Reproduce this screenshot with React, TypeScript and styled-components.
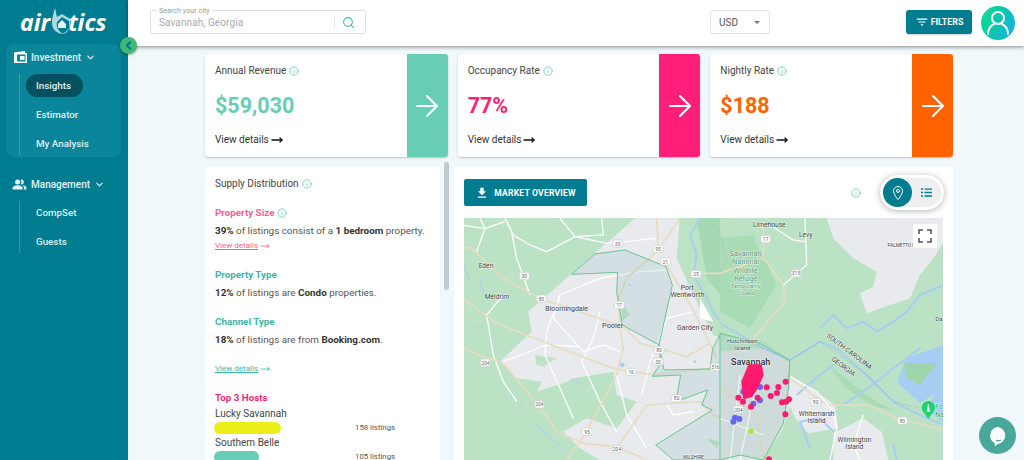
import React from "react";
import styled, { createGlobalStyle } from "styled-components";
import { Search, ChevronDown, ChevronLeft, ArrowRight, MoveRight, Info } from "lucide-react";
import { MdFilterList, MdFileDownload, MdPeopleAlt } from "react-icons/md";
import { FaListUl } from "react-icons/fa";
import { IoLocationOutline } from "react-icons/io5";

const TEAL = "#007c91";
const MINT = "#68cdb5";
const PINK = "#ff1f78";
const ORANGE = "#ff6300";
const SEA = "#3bb7aa";

const Global = createGlobalStyle`
  html, body { margin: 0; padding: 0; height: 100%; overflow: hidden; }
  body { font-family: Roboto, "Liberation Sans", sans-serif; background: #f0f8fb; color: #3c3c3c; }
  * { box-sizing: border-box; }
`;

const Shell = styled.div`display: flex; width: 1024px; height: 460px; overflow: hidden; position: relative;`;
const Sidebar = styled.aside`width: 128px; flex: none; background: ${TEAL}; color: #e8f6f8; padding: 44px 7px 0 6px; position: relative; display: flex; flex-direction: column;`;
const Logo = styled.div`position: absolute; top: 3px; left: 20px; display: flex; align-items: center; height: 38px; color: #fff; font: italic 700 23px "Open Sans", sans-serif; letter-spacing: 0;`;
const Collapse = styled.button`position: absolute; left: 120px; top: 37px; z-index: 5; width: 17px; height: 17px; border-radius: 50%; border: 0; padding: 0; background: #41b874; color: ${TEAL}; display: flex; align-items: center; justify-content: center; box-shadow: 0 1px 3px rgba(0,0,0,.35);`;
const NavGroup = styled.div<{ $active?: boolean }>`border-radius: 8px; background: ${p => p.$active ? "#0a8599" : "transparent"}; height: ${p => p.$active ? "113px" : "auto"}; margin-bottom: 14px; padding-top: 3px;`;
const NavHead = styled.div`display: flex; align-items: center; height: 20px; padding-left: 8px; font-size: 10px; font-weight: 500; gap: 4px; color: #e2f3f5;`;
const NavList = styled.div`margin: 7px 0 0 13px; border-left: 1px solid rgba(255,255,255,.22); padding-left: 6px; display: flex; flex-direction: column; gap: 6px;`;
const NavItem = styled.div<{ $active?: boolean }>`height: 23px; width: 57px; white-space: nowrap; display: flex; align-items: center; padding-left: 10px; border-radius: 12px; font-size: 9.8px; font-weight: 500; color: #dff1f4; background: ${p => p.$active ? "#03505f" : "transparent"};`;

const Main = styled.main`flex: 1; min-width: 0; display: flex; flex-direction: column;`;
const Header = styled.header`height: 46px; flex: none; background: #fff; box-shadow: 0 1px 4px rgba(0,0,0,.45); display: flex; align-items: center; padding: 0 0 2px 22px; position: relative; z-index: 2;`;
const SearchBox = styled.div`position: relative; width: 216px; height: 24px; border: 1px solid #dedede; border-radius: 3px; display: flex; align-items: center; padding: 0 10px 0 8px; font-size: 10px; color: #a9a9a9;`;
const Legend = styled.span`position: absolute; left: 6px; top: -5px; padding: 0 2px; background: #fff; font-size: 7.2px; line-height: 9px; color: #9a9a9a;`;
const SearchValue = styled.span`flex: 1; letter-spacing: .1px;`;
const Divider = styled.span`width: 1px; height: 12px; background: #dfe8e8; margin-right: 7px;`;
const SearchIcon = styled(Search)`color: ${SEA}; display: block;`;
const Select = styled.div`margin-left: 344px; width: 60px; height: 24px; border: 1px solid #e2e2e2; border-radius: 3px; display: flex; align-items: center; justify-content: space-between; padding: 0 9px 0 8px; font-size: 10px; color: #555;`;
const Caret = styled.span`width: 0; height: 0; border: 3px solid transparent; border-top: 3.5px solid #777; margin-top: 3px;`;
const FilterBtn = styled.button`margin-left: 136px; width: 66px; height: 24px; border: 0; border-radius: 3px; background: ${TEAL}; color: #fff; display: flex; align-items: center; justify-content: center; gap: 2px; font: 700 8.8px Roboto, sans-serif; box-shadow: 0 1px 2px rgba(0,0,0,.2);`;
const Avatar = styled.div`margin: 2px 0 0 9px; width: 34px; height: 34px; border-radius: 50%; background: linear-gradient(115deg, #0fe08b 0%, #0bc8a8 45%, #13aef0 100%); display: flex; align-items: center; justify-content: center;`;

const Content = styled.div`flex: 1; min-height: 0; width: 748px; margin-left: 77px; padding-top: 8px; display: flex; flex-direction: column; gap: 10px;`;
const Cards = styled.div`display: grid; grid-template-columns: repeat(3, 1fr); gap: 10px; flex: none;`;
const Card = styled.div`height: 103px; background: #fff; border-radius: 3px; box-shadow: 0 1px 2px rgba(0,0,0,.22); display: flex; overflow: hidden;`;
const CardBody = styled.div`flex: 1; padding: 10px 10px 0; display: flex; flex-direction: column;`;
const Label = styled.div`display: flex; align-items: center; gap: 3px; font-size: 10px; line-height: 14px; color: #444;`;
const InfoIcon = styled(Info)`color: ${MINT}; flex: none;`;
const Value = styled.div<{ $c: string }>`margin-top: 15px; font-size: 21.5px; line-height: 26px; font-weight: 700; color: ${p => p.$c};`;
const Details = styled.div`margin-top: 14px; display: flex; align-items: center; gap: 2px; font-size: 10px; line-height: 14px; color: #333;`;
const CardArrow = styled.div<{ $c: string }>`width: 41px; background: ${p => p.$c}; color: #fff; display: flex; align-items: center; justify-content: center;`;

const Lower = styled.div`flex: 1; min-height: 0; display: grid; grid-template-columns: 235px 14px 499px;`;
const Panel = styled.section`background: #fff; border-radius: 3px 3px 0 0; overflow: hidden; padding: 10px 10px 0;`;
const Track = styled.div`padding: 0 5px 0 4px; margin-top: -5px;`;
const Thumb = styled.div`height: 128px; background: #c3cacc; border-radius: 3px;`;
const Section = styled.div<{ $mt: number }>`margin-top: ${p => p.$mt}px;`;
const SectionTitle = styled.div<{ $c: string }>`display: flex; align-items: center; gap: 3px; font-size: 9.8px; line-height: 14px; font-weight: 700; color: ${p => p.$c};`;
const Stat = styled.p`margin: 4px 0 0; font-size: 9.9px; line-height: 14px; color: #555; white-space: nowrap; b { color: #333; font-weight: 700; }`;
const SmallLink = styled.div<{ $c: string; $mt: number }>`margin-top: ${p => p.$mt}px; display: flex; align-items: center; gap: 2px; font-size: 8px; line-height: 10px; color: ${p => p.$c}; span { text-decoration: underline; }`;
const Host = styled.div`margin-top: 2px; font-size: 10px; line-height: 14px; color: #444;`;
const BarRow = styled.div`display: flex; align-items: center; height: 13px; margin-left: -1px;`;
const BarSlot = styled.div`width: 141px; flex: none;`;
const Bar = styled.div<{ $c: string }>`height: 12px; border-radius: 6px; background: ${p => p.$c};`;
const Count = styled.span`font-size: 7.8px; color: #555;`;

const MapPanel = styled.section`background: #fff; border-radius: 3px 3px 0 0; overflow: hidden; padding: 12px 10px 0; display: flex; flex-direction: column;`;
const MapBar = styled.div`display: flex; align-items: center; height: 27px; margin-bottom: 12px; flex: none;`;
const MarketBtn = styled.button`width: 123px; height: 27px; border: 0; border-radius: 2px; background: ${TEAL}; color: #fff; display: flex; align-items: center; justify-content: center; gap: 5px; font: 700 8.6px Roboto, sans-serif; letter-spacing: .2px;`;
const MapInfo = styled(Info)`color: ${MINT}; margin-left: auto;`;
const Toggle = styled.div`margin-left: 19px; margin-right: -1px; width: 64px; height: 35px; border-radius: 18px; background: #efefef; border: 3px solid #fff; box-shadow: 0 1px 6px rgba(0,0,0,.3); display: flex; align-items: center;`;
const ToggleOn = styled.div`width: 29px; height: 29px; border-radius: 50%; background: ${TEAL}; color: #fff; display: flex; align-items: center; justify-content: center;`;
const ToggleOff = styled.div`flex: 1; color: ${TEAL}; display: flex; align-items: center; justify-content: center;`;
const MapFrame = styled.div`position: relative; flex: 1; min-height: 0; overflow: hidden; background: #bce2c5;`;
const MapSvg = styled.svg`display: block; width: 480px; height: 242px;`;
const MapLabel = styled.text`font-family: Roboto, sans-serif; fill: #3c4043; stroke: rgba(255,255,255,.7); stroke-width: 3px; paint-order: stroke;`;
const Fullscreen = styled.button`position: absolute; top: 6px; right: 6px; width: 24px; height: 24px; border: 0; padding: 0; background: #fff; color: #555; display: flex; align-items: center; justify-content: center;`;
const Chat = styled.div`position: absolute; left: 979px; top: 417px; width: 37px; height: 37px; border-radius: 50%; background: #4aa79b; display: flex; align-items: center; justify-content: center; z-index: 6;`;

const Tag: React.FC<{ x: number; y: number; t: string; s?: number; a?: "middle" | "start"; r?: number; c?: string; w?: number }> = ({ x, y, t, s = 24, a = "middle", r, c, w }) => (
  <MapLabel x={x} y={y} fontSize={s} fontWeight={w} textAnchor={a} style={c ? { fill: c } : undefined} transform={r ? `rotate(${r} ${x} ${y})` : undefined}>{t}</MapLabel>
);
const Shield: React.FC<{ x: number; y: number; t: string }> = ({ x, y, t }) => (
  <g>
    <rect x={x - 15} y={y - 11} width="30" height="22" rx="6" fill="#fff" stroke="#c8c8c8" strokeWidth="2" />
    <text x={x} y={y + 6} fontSize="15" textAnchor="middle" fill="#666" fontFamily="Roboto, sans-serif">{t}</text>
  </g>
);

const whiteRoads = [
  "M60 10 L75 40 L50 110", "M135 10 L160 60 L210 90 L260 110 L345 65 L440 85 L590 70",
  "M155 50 L170 130 L210 240", "M345 65 L430 60 L425 10", "M300 10 L345 65", "M0 30 L75 40 L135 20",
  "M260 350 L300 240 L420 190 L540 170 L620 165", "M260 350 L255 420 L300 520 L340 610", "M300 240 L280 310 L370 410 L430 390 L480 410",
  "M420 290 L400 370 L365 440 L420 560 L470 650", "M130 440 L260 390 L360 395", "M130 240 L80 300 L100 420 L130 500 L170 560",
  "M545 540 L570 440 L620 310 L700 290", "M470 480 L500 600 L560 700", "M620 570 L640 600 L700 590",
];
const highways = [
  "M0 95 L35 100 L130 190 L240 250 L490 335 L540 385 L680 425 L750 385",
  "M0 245 L110 325 L300 400 L460 460 L580 480 L750 460 L840 470",
  "M0 395 L60 420 L130 445 L250 590 L290 650 L370 685 L470 695 L560 735",
  "M320 735 L380 650 L470 480 L490 400 L480 340 L475 250 L500 190 L590 110 L660 10",
  "M590 10 L595 100", "M620 150 L680 250 L750 385 L770 430", "M700 175 L840 175", "M470 700 L560 570 L720 560 L760 600 L870 640",
];
const z5High = [
  "M0 175 L130 130 L190 210 L195 260 L100 370", "M130 20 L130 130", "M210 490 L320 570 L450 570 L530 610 L672 645",
  "M0 520 L60 560 L110 600 L130 735",
];
const z5White = ["M190 210 L260 150 L255 10", "M150 30 L220 75 L255 80", "M210 485 L290 530 L340 590 L350 640 L330 735", "M430 600 L400 690 L420 735", "M0 610 L130 660 M60 480 L30 735 M110 500 L60 735"];
const z5River = [
  "M0 325 L130 400 L210 435 L300 380 L350 400 L440 480 L520 560 L600 600 L672 630",
  "M300 340 L340 300 L380 340 L430 320 L470 350 L520 320 L560 290 L600 240 L672 210",
  "M230 540 L300 480 L340 450", "M370 570 L470 500 L560 430 L600 400",
  "M340 650 L300 610 L240 620 L270 700", "M520 690 L530 735", "M330 710 L335 735",
];
const pinkDots = [[197,500],[140,517],[175,516],[171,534],[152,543],[113,548],[55,548],[69,560],[93,575],[186,562],[198,560],[207,553],[196,598],[147,733]];
const blueDots = [[120,516],[120,556],[100,566],[70,530],[40,620],[45,608],[58,612]];

const App: React.FC = () => (
  <Shell>
    <Global />
    <Sidebar>
      <Logo>
        air
        <svg width="21" height="30" viewBox="0 0 21 30" style={{ margin: "-2px -2px 0 -1px" }}>
          <path d="M6 2 C4 9 3 13 3 17 C3 24 9 28 14 28 C9 25 7 21 8 16 L13 11 L20 15 L20 22 C18 25 16 27 13 28 C19 28 21 22 21 13 L13 8 L8 11 C7 8 7 5 6 2 Z" fill="#a9dbe0" />
          <path d="M9 18 L13 14 L17 18 L17 22 L9 22 Z" fill="#e8f6f8" />
        </svg>
        tics
      </Logo>
      <Collapse aria-label="Collapse"><ChevronLeft size={13} strokeWidth={4} /></Collapse>
      <NavGroup $active>
        <NavHead>
          <svg width="13" height="13" viewBox="0 0 13 13"><path d="M0 1.5 L11 0 L11 2 L13 2 L13 12 L0 12 Z M3 3.5 L3 10.5 L11.5 10.5 L11.5 3.5 Z M6 5 H10.5 V9 H6 Z" fill="#fff" fillRule="evenodd" /></svg>
          Investment <ChevronDown size={11} strokeWidth={2.5} />
        </NavHead>
        <NavList>
          <NavItem $active>Insights</NavItem>
          <NavItem>Estimator</NavItem>
          <NavItem>My Analysis</NavItem>
        </NavList>
      </NavGroup>
      <NavGroup>
        <NavHead>
          <MdPeopleAlt size={15} style={{ marginLeft: -2 }} /> Management <ChevronDown size={11} strokeWidth={2.5} />
        </NavHead>
        <NavList>
          <NavItem>CompSet</NavItem>
          <NavItem>Guests</NavItem>
        </NavList>
      </NavGroup>
    </Sidebar>
    <Main>
      <Header>
        <SearchBox>
          <Legend>Search your city</Legend>
          <SearchValue>Savannah, Georgia</SearchValue>
          <Divider />
          <SearchIcon size={13} />
        </SearchBox>
        <Select>USD<Caret /></Select>
        <FilterBtn><MdFilterList size={14} />FILTERS</FilterBtn>
        <Avatar>
          <svg width="24" height="26" viewBox="0 0 24 26" fill="none" stroke="#fff" strokeWidth="2"><circle cx="12" cy="8" r="6" /><path d="M2 24 C2 18 5 15.5 8 14 M22 24 C22 18 19 15.5 16 14" strokeLinecap="round" /></svg>
        </Avatar>
      </Header>
      <Content>
        <Cards>
          {[["Annual Revenue", "$59,030", MINT], ["Occupancy Rate", "77%", PINK], ["Nightly Rate", "$188", ORANGE]].map(([l, v, c]) => (
            <Card key={l}>
              <CardBody>
                <Label>{l} <InfoIcon size={10} /></Label>
                <Value $c={c}>{v}</Value>
                <Details>View details <MoveRight size={12} color="#111" strokeWidth={2.6} /></Details>
              </CardBody>
              <CardArrow $c={c}><ArrowRight size={34} strokeWidth={1.5} /></CardArrow>
            </Card>
          ))}
        </Cards>
        <Lower>
          <Panel>
            <Label>Supply Distribution <InfoIcon size={10} /></Label>
            <Section $mt={15}>
              <SectionTitle $c="#f9608f">Property Size <InfoIcon size={10} /></SectionTitle>
              <Stat><b>39%</b> of listings consist of a <b>1 bedroom</b> property.</Stat>
              <SmallLink $c="#f9608f" $mt={3}><span>View details</span> <MoveRight size={10} /></SmallLink>
            </Section>
            <Section $mt={17}>
              <SectionTitle $c={SEA}>Property Type</SectionTitle>
              <Stat><b>12%</b> of listings are <b>Condo</b> properties.</Stat>
            </Section>
            <Section $mt={15}>
              <SectionTitle $c={SEA}>Channel Type</SectionTitle>
              <Stat><b>18%</b> of listings are from <b>Booking.com</b>.</Stat>
              <SmallLink $c={SEA} $mt={17}><span>View details</span> <MoveRight size={10} /></SmallLink>
            </Section>
            <Section $mt={17}>
              <SectionTitle $c={PINK}>Top 3 Hosts</SectionTitle>
              <Host>Lucky Savannah</Host>
              <BarRow><BarSlot><Bar $c="#ecee1c" style={{ width: 67 }} /></BarSlot><Count>158 listings</Count></BarRow>
              <Host>Southern Belle</Host>
              <BarRow><BarSlot><Bar $c={MINT} style={{ width: 45 }} /></BarSlot><Count>105 listings</Count></BarRow>
            </Section>
          </Panel>
          <Track><Thumb /></Track>
          <MapPanel>
            <MapBar>
              <MarketBtn><MdFileDownload size={14} />MARKET OVERVIEW</MarketBtn>
              <MapInfo size={10} />
              <Toggle>
                <ToggleOn><IoLocationOutline size={16} /></ToggleOn>
                <ToggleOff><FaListUl size={11} /></ToggleOff>
              </Toggle>
            </MapBar>
            <MapFrame>
              <MapSvg viewBox="464 218 480 242">
                <rect x="464" y="218" width="480" height="242" fill="#bce2c5" />
                <g transform="translate(460 215) scale(.33333)" fill="none">
                  <path d="M660 10 L525 10 L330 180 L205 290 L215 350 L120 440 L170 490 L245 500 L230 530 L320 500 L340 490 L460 470 L470 540 L530 560 L470 640 L380 610 L310 650 L360 700 L420 735 L870 735 L870 400 L760 360 L700 240 L650 130 Z" fill="#e9eaee" />
                  <path d="M660 10 L870 10 L870 350 L780 300 L720 180 L650 130 Z" fill="#bde3c6" />
                  <path d="M710 10 L810 10 L870 60 L870 130 L830 240 L790 250 L740 190 Z" fill="#a6d9b2" />
                  <path d="M225 420 L290 430 L250 455 L230 450 Z M490 270 L510 300 L480 320 Z M740 670 L780 680 L770 700 Z" fill="#bde3c6" />
                  <path d="M720 250 L760 320 L720 310 Z" fill="#fff" />
                  <path d="M720 10 L690 60 L710 120 L700 180 L740 250 L770 310 L870 360" stroke="#a6cff2" strokeWidth="6" />
                  <path d="M750 10 L800 80 L790 160 L860 230" stroke="#7aa7c7" strokeWidth="1.5" strokeDasharray="3 4" />
                  <path d="M0 120 L30 200 M60 190 L70 230 M40 330 L70 340 M290 680 L310 710 M330 490 L370 510 M150 540 L190 580 M230 630 L280 680" stroke="#a6cff2" strokeWidth="3" />
                  <circle cx="487" cy="450" r="7" fill="#a6cff2" /><circle cx="510" cy="210" r="3" fill="#a6cff2" /><circle cx="705" cy="440" r="4" fill="#a6cff2" />
                  {whiteRoads.map(d => <path key={d} d={d} stroke="#fff" strokeWidth="4" />)}
                  {highways.map(d => <path key={d} d={d} stroke="#e7dcbf" strokeWidth="5" />)}
                  <path d="M335 178 L405 117 L495 105 L618 155 L637 210 L597 390 L612 465 L750 462 L758 400 L782 356 L870 390 L870 735 L850 720 L800 735 L640 735 L587 690 L757 585 L725 570 L743 525 L648 560 L662 480 L577 484 L602 445 L597 390 L487 330 L470 230 L473 172 Z" fill="rgba(110,170,170,.17)" stroke="#66c68c" strokeWidth="3" strokeLinejoin="round" />
                  <Tag x={78} y={158} t="Eden" s={20} />
                  <Tag x={111} y={253} t="Meldrim" s={20} />
                  <Tag x={320} y={288} t="Bloomingdale" s={21} />
                  <Tag x={458} y={340} t="Pooler" s={22} />
                  <Tag x={682} y={225} t="Port" s={21} />
                  <Tag x={682} y={246} t="Wentworth" s={21} />
                  <Tag x={705} y={345} t="Garden City" s={21} />
                  <Tag x={700} y={733} t="WILSHIRE" s={14} />
                  <Shield x={473} y={86} t="30" /><Shield x={594} y={102} t="95" /><Shield x={616} y={140} t="21" /><Shield x={708} y={177} t="25" />
                  <Shield x={193} y={183} t="30" /><Shield x={244} y={251} t="80" /><Shield x={478} y={270} t="17" /><Shield x={597} y={405} t="80" />
                  <Shield x={594} y={440} t="30" /><Shield x={76} y={443} t="204" /><Shield x={513} y={471} t="16" /><Shield x={766} y={456} t="516" />
                  <Shield x={238} y={568} t="204" /><Shield x={650} y={550} t="80" /><Shield x={381} y={650} t="95" /><Shield x={471} y={702} t="204" />
                </g>
                <g transform="translate(720 215) scale(.33333)" fill="none">
                  <path d="M0 10 H672 V735 H0 Z" fill="#bce2c5" />
                  <path d="M0 70 L100 60 L110 90 L130 120 L170 210 L90 340 L0 290 Z" fill="#a9dcb5" />
                  <path d="M320 10 L672 10 L672 80 L640 130 L600 180 L570 250 L510 270 L440 295 L420 235 L460 215 L470 170 L400 130 L340 70 Z" fill="#e9eaee" />
                  <path d="M672 390 L640 400 L560 430 L530 500 L600 565 L672 625 Z" fill="#a8cdf3" />
                  <path d="M550 445 L650 445 L600 510 L560 490 Z" fill="#9ed5aa" />
                  <path d="M330 455 L470 560 L530 590 L450 570 L380 520 Z" fill="#a9dcb5" />
                  <path d="M0 410 L130 400 L210 440 L200 490 L215 560 L190 640 L130 735 L0 735 Z" fill="#dfe4e4" />
                  <path d="M212 482 L290 530 L345 570 L355 640 L265 655 L225 610 L205 560 Z M340 655 L430 610 L485 650 L505 735 L340 735 Z" fill="#e9eaee" />
                  <path d="M640 540 L625 600 L600 590 L600 565 Z" fill="#bde3c6" />
                  {z5River.map(d => <path key={d} d={d} stroke="#a8cdf3" strokeWidth="6" strokeLinejoin="round" />)}
                  <path d="M120 375 L210 435 L300 380 L360 420 L440 480 L520 560 L605 580" stroke="#7b9cb8" strokeWidth="1.5" strokeDasharray="4 4" />
                  <path d="M0 60 L20 130 L0 170" stroke="#7aa7c7" strokeWidth="1.5" strokeDasharray="3 4" />
                  {z5High.map(d => <path key={d} d={d} stroke="#e7dcbf" strokeWidth="5" />)}
                  {z5White.map(d => <path key={d} d={d} stroke="#fff" strokeWidth="4" />)}
                  <path d="M0 355 L120 385 L210 437 L205 520 L190 625 L130 735 L60 720 L0 735 Z" fill="rgba(110,170,170,.14)" stroke="#66c68c" strokeWidth="3" strokeLinejoin="round" />
                  <Tag x={148} y={36} t="Limehouse" s={20} />
                  <Tag x={257} y={66} t="Levy" s={20} />
                  <Tag x={560} y={97} t="PALMETTO BLUFF" s={14} />
                  <Tag x={77} y={122} t="Savannah" s={22} c="#5f9a78" />
                  <Tag x={77} y={148} t="National" s={22} c="#5f9a78" />
                  <Tag x={77} y={173} t="Wildlife" s={22} c="#5f9a78" />
                  <Tag x={77} y={198} t="Refuge" s={22} c="#5f9a78" />
                  <Tag x={77} y={220} t="Temporarily" s={17} c="#5f9a78" />
                  <Tag x={77} y={240} t="closed" s={17} c="#5f9a78" />
                  <Tag x={67} y={383} t="Hutchinson" s={18} />
                  <Tag x={67} y={404} t="Island" s={18} />
                  <Tag x={92} y={451} t="Savannah" s={27} c="#2b2f33" w={500} />
                  <Tag x={318} y={365} t="SOUTH CAROLINA" s={20} a="start" r={37} />
                  <Tag x={333} y={435} t="GEORGIA" s={20} a="start" r={37} />
                  <Tag x={290} y={602} t="Whitemarsh" s={20} />
                  <Tag x={290} y={624} t="Island" s={20} />
                  <Tag x={403} y={681} t="Wilmington" s={20} />
                  <Tag x={403} y={702} t="Island" s={20} />
                  <Tag x={646} y={318} t="Da" s={18} a="start" />
                  <Tag x={646} y={581} t="Fo" s={20} a="start" c="#1fa463" />
                  <Tag x={646} y={607} t="Na" s={20} a="start" c="#1fa463" />
                  <Shield x={137} y={72} t="17" /><Shield x={228} y={175} t="315" /><Shield x={287} y={561} t="80" /><Shield x={547} y={617} t="80" /><Shield x={55} y={584} t="204" />
                  <path d="M625 612 C612 592 605 586 605 578 A20 20 0 0 1 645 578 C645 586 638 592 625 612 Z" fill="#1fd16f" />
                  <path d="M620 590 L624 568 L626 568 L630 590 Z" fill="#fff" />
                  {blueDots.map(([x, y]) => <circle key={`${x}-${y}`} cx={x} cy={y} r="9" fill="#6666f0" />)}
                  <path d="M88 452 L122 452 L127 480 L110 518 L95 542 L73 548 L68 500 Z" fill="#ff1a70" stroke="#ff1a70" strokeWidth="8" strokeLinejoin="round" />
                  {pinkDots.map(([x, y]) => <circle key={`${x}-${y}`} cx={x} cy={y} r="9" fill="#ff1a70" />)}
                  <circle cx="93" cy="648" r="8" fill="#a6e83a" />
                </g>
              </MapSvg>
              <Fullscreen aria-label="Fullscreen">
                <svg width="14" height="14" viewBox="0 0 14 14" fill="none" stroke="#555" strokeWidth="1.6"><path d="M1 5 V1 H5 M9 1 H13 V5 M13 9 V13 H9 M5 13 H1 V9" /></svg>
              </Fullscreen>
            </MapFrame>
          </MapPanel>
        </Lower>
      </Content>
    </Main>
    <Chat>
      <svg width="22" height="22" viewBox="0 0 22 22"><path d="M11 2 A8.6 8.6 0 0 1 11 19 L8 21 L7.5 18 A8.6 8.6 0 0 1 11 2 Z" fill="#fff" /><path d="M9 15 Q11 16.5 14 15" stroke="#4aa79b" strokeWidth="1.3" fill="none" /></svg>
    </Chat>
  </Shell>
);

export default App;
